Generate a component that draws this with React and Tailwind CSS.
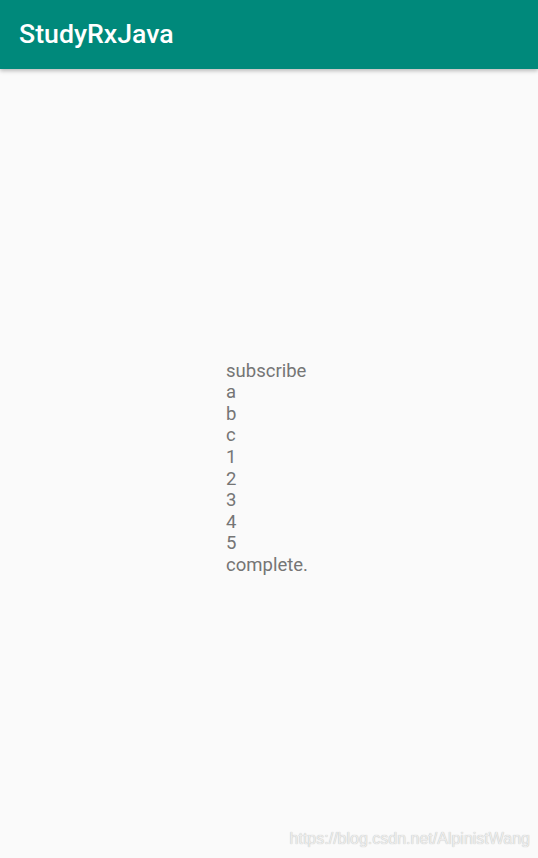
export default function App() {
    const lines = ['subscribe', 'a', 'b', 'c', '1', '2', '3', '4', '5', 'complete.'];

    return (
        <div className="relative flex flex-col h-[858px] w-[538px] overflow-hidden bg-[#fafafa]" style={{ fontFamily: 'Roboto, "Noto Sans", sans-serif' }}>
            {/* App bar */}
            <div className="relative z-10 flex items-center h-[69px] px-[19px] bg-[#00897b] shadow-[0_2px_4px_rgba(0,0,0,0.25)]">
                <h1 className="text-[26.7px] font-medium text-white leading-none">StudyRxJava</h1>
            </div>

            {/* Content */}
            <div className="flex flex-1 items-center justify-center pt-[10px] pr-[4px]">
                <div className="text-[18.5px] leading-[21.6px] text-[#757575]">
                    {lines.map((line) => (
                        <div key={line}>{line}</div>
                    ))}
                </div>
            </div>

            {/* Watermark */}
            <div className="absolute right-[8px] bottom-[7px] text-[16px] text-[#ededed] [text-shadow:0_0_1px_rgba(0,0,0,0.3)]" style={{ fontFamily: '"Liberation Sans", Arial, sans-serif' }}>
                https://blog.csdn.net/AlpinistWang
            </div>
        </div>
    );
}
